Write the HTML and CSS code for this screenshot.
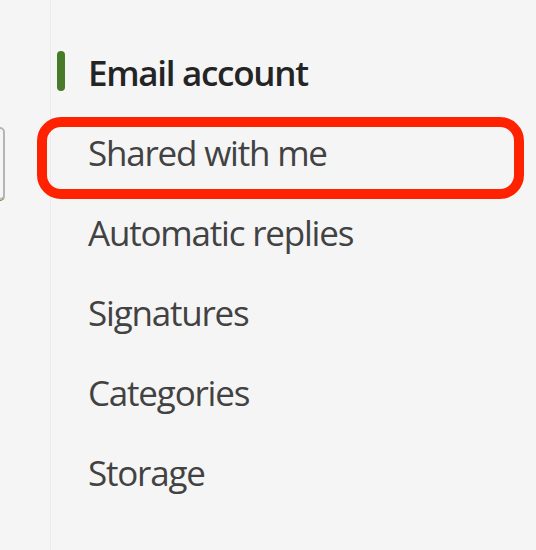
FILE: index.html
```html
<!DOCTYPE html>
<html>
<head>
<meta charset="utf-8">
<link rel="stylesheet" href="styles.css">
</head>
<body>
<div class="page">
  <div class="rail">
    <div class="rail-card"></div>
  </div>
  <nav class="nav">
    <div class="item active"><span class="indicator"></span>Email account</div>
    <div class="item highlighted">Shared with me<span class="callout"></span></div>
    <div class="item">Automatic replies</div>
    <div class="item">Signatures</div>
    <div class="item">Categories</div>
    <div class="item">Storage</div>
  </nav>
</div>
</body>
</html>
```

FILE: styles.css
```css
html, body {
  margin: 0;
  padding: 0;
  background: #f5f5f5;
}
.page {
  display: flex;
  width: 536px;
  height: 550px;
  overflow: hidden;
  font-family: "Open Sans", "Noto Sans", sans-serif;
}
.rail {
  width: 50px;
  flex: none;
  border-right: 1px solid #ebebeb;
  padding-top: 127px;
  box-sizing: content-box;
}
.rail-card {
  width: 20px;
  height: 69px;
  margin-left: -19px;
  border: 2px solid #b5b5b5;
  border-radius: 5px;
  box-shadow: 0 1px 0 #5a8a3a;
}
.nav {
  flex: 1;
  padding-top: 33px;
}
.item {
  position: relative;
  height: 80px;
  line-height: 80px;
  padding-left: 37px;
  font-size: 35px;
  letter-spacing: -1.2px;
  color: #424242;
  white-space: nowrap;
}
.item.active {
  font-weight: 600;
  letter-spacing: -1.3px;
  color: #242424;
}
.indicator {
  position: absolute;
  left: 6px;
  top: 18px;
  width: 8px;
  height: 40px;
  border-radius: 4px;
  background: #477a29;
}
.callout {
  position: absolute;
  left: -14px;
  top: 4px;
  width: 487px;
  height: 82px;
  box-sizing: border-box;
  border: 10px solid #ff2200;
  border-radius: 24px;
}
```
